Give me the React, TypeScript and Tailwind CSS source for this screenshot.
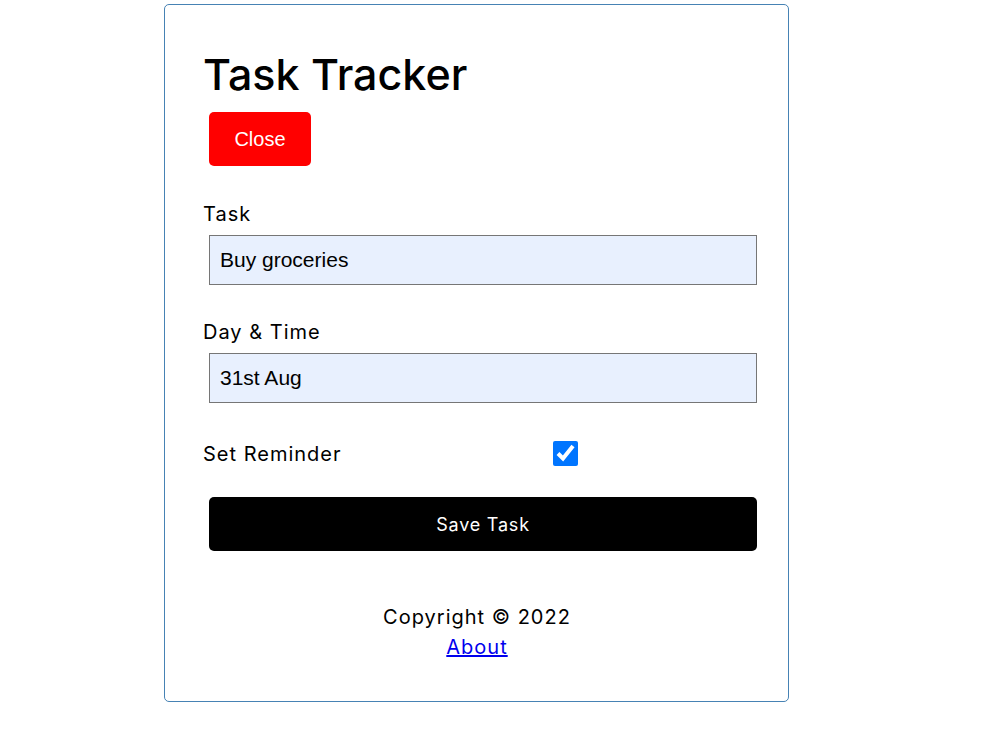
import React from "react";

const App: React.FC = () => {
    return (
        <div className="w-full min-h-[750px] bg-white">
            <div className="ml-[164px] mt-[4px] w-[625px] h-[698px] border border-[#4682b4] rounded-[5px] pl-[38px] pr-[37px] pt-[44px] font-['Inter',sans-serif] text-black">
                {/* Header */}
                <h1 className="text-[43px] leading-[50px] font-medium">Task Tracker</h1>
                <button className="mt-[13px] ml-[6px] w-[102px] h-[54px] bg-[#ff0000] text-white rounded-[5px] text-[20px] font-['Liberation_Sans',Arial,sans-serif]">
                    Close
                </button>

                {/* Form */}
                <div className="mt-[36px]">
                    <label className="block text-[20px] leading-[24px] tracking-[1px]">Task</label>
                    <input
                        type="text"
                        defaultValue="Buy groceries"
                        className="block mt-[9px] ml-[6px] w-[548px] h-[50px] bg-[#e8f0fe] border border-[#767676] px-[10px] text-[21px] font-['Liberation_Sans',Arial,sans-serif] text-black outline-none"
                    />
                </div>

                <div className="mt-[35px]">
                    <label className="block text-[20px] leading-[24px] tracking-[1px]">Day &amp; Time</label>
                    <input
                        type="text"
                        defaultValue="31st Aug"
                        className="block mt-[9px] ml-[6px] w-[548px] h-[50px] bg-[#e8f0fe] border border-[#767676] px-[10px] text-[21px] font-['Liberation_Sans',Arial,sans-serif] text-black outline-none"
                    />
                </div>

                <div className="mt-[36px] h-[29px] flex items-center">
                    <label className="w-[350px] text-[20px] leading-[24px] tracking-[1px]">Set Reminder</label>
                    <input type="checkbox" defaultChecked className="w-[25px] h-[25px] accent-[#0075ff]" />
                </div>

                <button className="mt-[29px] ml-[6px] w-[548px] h-[54px] bg-black text-white rounded-[5px] text-[18px] tracking-[0.8px]">
                    Save Task
                </button>

                {/* Footer */}
                <footer className="mt-[52px] text-center text-[20px] tracking-[1px]">
                    <p className="leading-[28px]">Copyright © 2022</p>
                    <a href="#" className="leading-[33px] text-[#0000ee] underline">About</a>
                </footer>
            </div>
        </div>
    );
};

export default App;
